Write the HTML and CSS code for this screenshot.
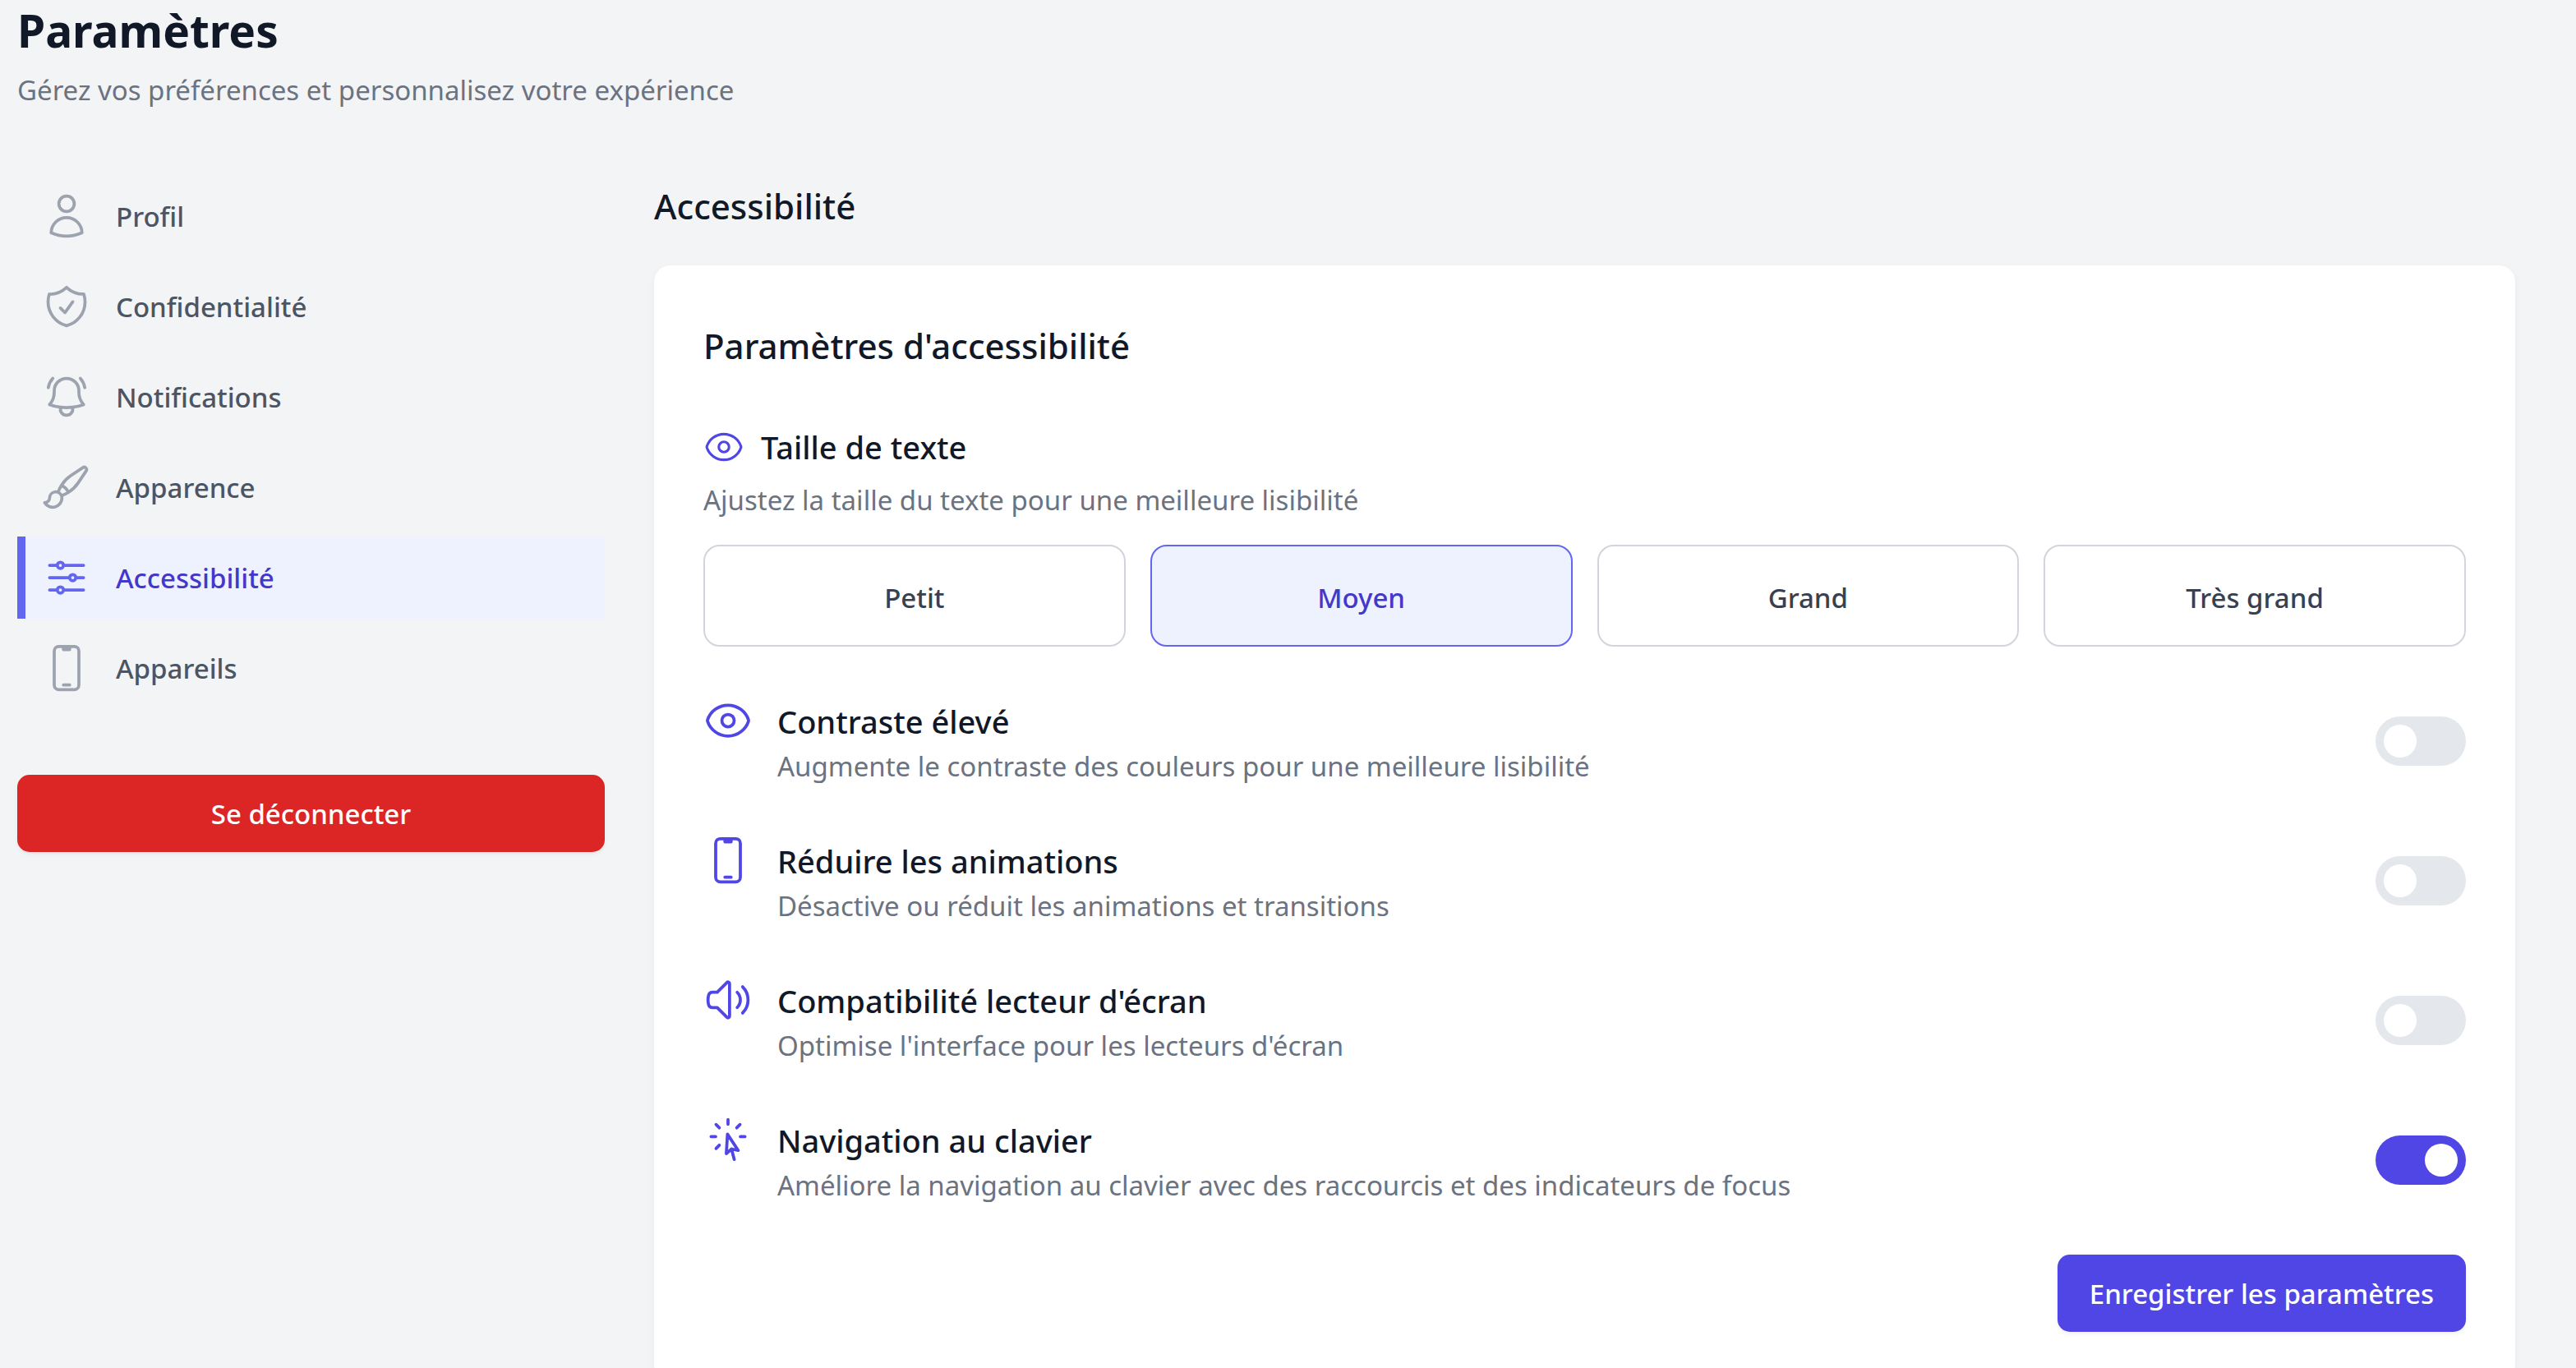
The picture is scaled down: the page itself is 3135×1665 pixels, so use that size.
FILE: index.html
```html
<!DOCTYPE html>
<html lang="fr">
<head>
  <meta charset="utf-8">
  <meta name="viewport" content="width=device-width, initial-scale=1">
  <title>Paramètres</title>
  <link rel="stylesheet" href="styles.css">
</head>
<body>
  <svg class="sprite" aria-hidden="true">
    <symbol id="icon-user" viewBox="0 0 24 24"><path d="M15.75 6a3.75 3.75 0 1 1-7.5 0 3.75 3.75 0 0 1 7.5 0ZM4.501 20.118a7.5 7.5 0 0 1 14.998 0A17.933 17.933 0 0 1 12 21.75c-2.676 0-5.216-.584-7.499-1.632Z"/></symbol>
    <symbol id="icon-shield" viewBox="0 0 24 24"><path d="M9 12.75 11.25 15 15 9.75m-3-7.036A11.959 11.959 0 0 1 3.598 6 11.99 11.99 0 0 0 3 9.749c0 5.592 3.824 10.29 9 11.623 5.176-1.332 9-6.03 9-11.622 0-1.31-.21-2.571-.598-3.751h-.152c-3.196 0-6.1-1.248-8.25-3.285Z"/></symbol>
    <symbol id="icon-bell" viewBox="0 0 24 24"><path d="M14.857 17.082a23.848 23.848 0 0 0 5.454-1.31A8.967 8.967 0 0 1 18 9.75V9A6 6 0 0 0 6 9v.75a8.967 8.967 0 0 1-2.312 6.022c1.733.64 3.56 1.085 5.455 1.31m5.714 0a24.255 24.255 0 0 1-5.714 0m5.714 0a3 3 0 1 1-5.714 0M3.124 7.5A8.969 8.969 0 0 1 5.292 3m13.416 0a8.969 8.969 0 0 1 2.168 4.5"/></symbol>
    <symbol id="icon-brush" viewBox="0 0 24 24"><path d="M9.53 16.122a3 3 0 0 0-5.78 1.128 2.25 2.25 0 0 1-2.4 2.245 4.5 4.5 0 0 0 8.4-2.245c0-.399-.078-.78-.22-1.128Zm0 0a15.998 15.998 0 0 0 3.388-1.62m-5.043-.025a15.994 15.994 0 0 1 1.622-3.395m3.42 3.42a15.995 15.995 0 0 0 4.764-4.648l3.876-5.814a1.151 1.151 0 0 0-1.597-1.597L14.146 6.32a15.996 15.996 0 0 0-4.649 4.763m3.42 3.42a6.776 6.776 0 0 0-3.42-3.42"/></symbol>
    <symbol id="icon-sliders" viewBox="0 0 24 24"><path d="M10.5 6h9.75M10.5 6a1.5 1.5 0 1 1-3 0m3 0a1.5 1.5 0 1 0-3 0M3.75 6H7.5m3 12h9.75m-9.75 0a1.5 1.5 0 0 1-3 0m3 0a1.5 1.5 0 0 0-3 0m-3.75 0H7.5m9-6h3.75m-3.75 0a1.5 1.5 0 0 1-3 0m3 0a1.5 1.5 0 0 0-3 0m-9.75 0h9.75"/></symbol>
    <symbol id="icon-phone" viewBox="0 0 24 24"><path d="M10.5 1.5H8.25A2.25 2.25 0 0 0 6 3.75v16.5a2.25 2.25 0 0 0 2.25 2.25h7.5A2.25 2.25 0 0 0 18 20.25V3.75a2.25 2.25 0 0 0-2.25-2.25H13.5m-3 0V3h3V1.5m-3 0h3m-3 18.75h3"/></symbol>
    <symbol id="icon-eye" viewBox="0 0 24 24"><path d="M2.036 12.322a1.012 1.012 0 0 1 0-.639C3.423 7.51 7.36 4.5 12 4.5c4.638 0 8.573 3.007 9.963 7.178.07.207.07.431 0 .639C20.577 16.49 16.64 19.5 12 19.5c-4.638 0-8.573-3.007-9.963-7.178Z"/><path d="M15 12a3 3 0 1 1-6 0 3 3 0 0 1 6 0Z"/></symbol>
    <symbol id="icon-speaker" viewBox="0 0 24 24"><path d="M19.114 5.636a9 9 0 0 1 0 12.728M16.463 8.288a5.25 5.25 0 0 1 0 7.424M6.75 8.25l4.72-4.72a.75.75 0 0 1 1.28.53v15.88a.75.75 0 0 1-1.28.53l-4.72-4.72H4.51c-.88 0-1.704-.507-1.938-1.354A9.009 9.009 0 0 1 2.25 12c0-.83.112-1.633.322-2.396C2.806 8.756 3.63 8.25 4.51 8.25H6.75Z"/></symbol>
    <symbol id="icon-cursor" viewBox="0 0 24 24"><path d="M15.042 21.672 13.684 16.6m0 0-2.51 2.225.569-9.47 5.227 7.917-3.286-.672ZM12 2.25V4.5m5.834.166-1.591 1.591M20.25 10.5H18M7.757 14.743l-1.59 1.59M6 10.5H3.75m4.007-4.243-1.59-1.59"/></symbol>
  </svg>

  <div class="page">
    <header class="page-header">
      <h1 class="page-title">Paramètres</h1>
      <p class="description">Gérez vos préférences et personnalisez votre expérience</p>
    </header>

    <div class="layout">
      <aside class="sidebar">
        <nav class="nav" aria-label="Paramètres">
          <a class="nav-item" href="#profil"><svg class="icon" aria-hidden="true"><use href="#icon-user"/></svg><span class="nav-label">Profil</span></a>
          <a class="nav-item" href="#confidentialite"><svg class="icon" aria-hidden="true"><use href="#icon-shield"/></svg><span class="nav-label">Confidentialité</span></a>
          <a class="nav-item" href="#notifications"><svg class="icon" aria-hidden="true"><use href="#icon-bell"/></svg><span class="nav-label">Notifications</span></a>
          <a class="nav-item" href="#apparence"><svg class="icon" aria-hidden="true"><use href="#icon-brush"/></svg><span class="nav-label">Apparence</span></a>
          <a class="nav-item nav-item-active" href="#accessibilite" aria-current="page"><svg class="icon" aria-hidden="true"><use href="#icon-sliders"/></svg><span class="nav-label">Accessibilité</span></a>
          <a class="nav-item" href="#appareils"><svg class="icon" aria-hidden="true"><use href="#icon-phone"/></svg><span class="nav-label">Appareils</span></a>
        </nav>
        <button class="button button-danger" type="button">Se déconnecter</button>
      </aside>

      <main class="content" id="accessibilite">
        <h2 class="section-title">Accessibilité</h2>
        <form class="card">
          <h3 class="card-title">Paramètres d'accessibilité</h3>

          <section class="text-size">
            <h4 class="label label-with-icon"><svg class="icon icon-small" aria-hidden="true"><use href="#icon-eye"/></svg>Taille de texte</h4>
            <p class="description">Ajustez la taille du texte pour une meilleure lisibilité</p>
            <div class="options">
              <button class="option" type="button" aria-pressed="false">Petit</button>
              <button class="option option-selected" type="button" aria-pressed="true">Moyen</button>
              <button class="option" type="button" aria-pressed="false">Grand</button>
              <button class="option" type="button" aria-pressed="false">Très grand</button>
            </div>
          </section>

          <div class="settings">
            <div class="setting">
              <svg class="icon" aria-hidden="true"><use href="#icon-eye"/></svg>
              <div class="setting-text">
                <label class="label" for="contrast">Contraste élevé</label>
                <p class="description" id="contrast-text">Augmente le contraste des couleurs pour une meilleure lisibilité</p>
              </div>
              <input class="toggle" type="checkbox" role="switch" id="contrast" aria-describedby="contrast-text">
            </div>
            <div class="setting">
              <svg class="icon" aria-hidden="true"><use href="#icon-phone"/></svg>
              <div class="setting-text">
                <label class="label" for="motion">Réduire les animations</label>
                <p class="description" id="motion-text">Désactive ou réduit les animations et transitions</p>
              </div>
              <input class="toggle" type="checkbox" role="switch" id="motion" aria-describedby="motion-text">
            </div>
            <div class="setting">
              <svg class="icon" aria-hidden="true"><use href="#icon-speaker"/></svg>
              <div class="setting-text">
                <label class="label" for="reader">Compatibilité lecteur d'écran</label>
                <p class="description" id="reader-text">Optimise l'interface pour les lecteurs d'écran</p>
              </div>
              <input class="toggle" type="checkbox" role="switch" id="reader" aria-describedby="reader-text">
            </div>
            <div class="setting">
              <svg class="icon" aria-hidden="true"><use href="#icon-cursor"/></svg>
              <div class="setting-text">
                <label class="label" for="keyboard">Navigation au clavier</label>
                <p class="description" id="keyboard-text">Améliore la navigation au clavier avec des raccourcis et des indicateurs de focus</p>
              </div>
              <input class="toggle" type="checkbox" role="switch" id="keyboard" aria-describedby="keyboard-text" checked>
            </div>
          </div>

          <div class="actions">
            <button class="button button-primary" type="submit">Enregistrer les paramètres</button>
          </div>
        </form>
      </main>
    </div>
  </div>
</body>
</html>
```
FILE: styles.css
```css
*,
*::before {
  box-sizing: border-box;
}

body {
  margin: 0;
  background: #f3f4f6;
  color: #111827;
  font-family: "Segoe UI", "Noto Sans", sans-serif;
  font-size: 33px;
  line-height: 48px;
}

h1,
h2,
h3,
h4,
p {
  margin: 0;
}

button {
  font: inherit;
  font-weight: 550;
  cursor: pointer;
}

.sprite {
  display: none;
}

.page {
  padding: 0 74px 60px 21px;
}

.page-header {
  display: flex;
  flex-direction: column;
  gap: 12px;
  margin-bottom: 79px;
}

.page-title {
  font-size: 55px;
  font-weight: 700;
  line-height: 74px;
}

.description {
  color: #6b7280;
}

.layout {
  display: grid;
  grid-template-columns: repeat(12, minmax(0, 1fr));
  column-gap: 60px;
  align-items: start;
}

.sidebar {
  grid-column: span 3;
  display: grid;
  gap: 80px;
}

.content {
  grid-column: span 9;
}

/* Icons */

.icon {
  flex: none;
  width: 60px;
  height: 60px;
  fill: none;
  stroke: currentColor;
  stroke-width: 1.5;
  stroke-linecap: round;
  stroke-linejoin: round;
  color: #4f46e5;
}

.icon-small {
  width: 50px;
  height: 50px;
}

/* Sidebar navigation */

.nav {
  display: grid;
  gap: 10px;
}

.nav-item {
  display: flex;
  align-items: center;
  gap: 30px;
  padding: 20px 30px 20px 20px;
  border-left: 10px solid transparent;
  color: #4b5563;
  font-weight: 550;
  text-decoration: none;
}

.nav-item .icon {
  color: #9ca3af;
}

.nav-label {
  padding-top: 2px;
}

.nav-item-active {
  border-color: #6366f1;
  background: #eef2ff;
  color: #4338ca;
}

.nav-item-active .icon {
  color: #6366f1;
}

/* Buttons */

.button {
  padding: 24px 39px 22px;
  border: 0;
  border-radius: 15px;
  color: #fff;
  box-shadow: 0 3px 5px rgb(0 0 0 / 5%);
}

.button-danger {
  background: #dc2626;
}

.button-primary {
  background: #4f46e5;
}

/* Card */

.section-title,
.card-title {
  font-size: 42px;
  font-weight: 550;
  line-height: 75px;
}

.section-title {
  margin-bottom: 35px;
}

.card {
  padding: 60px;
  border-radius: 20px;
  background: #fff;
  box-shadow: 0 3px 8px rgb(0 0 0 / 5%);
}

.card-title {
  margin-bottom: 55px;
}

.label {
  font-size: 38px;
  font-weight: 550;
  line-height: 62px;
}

.label-with-icon {
  display: flex;
  align-items: center;
  gap: 20px;
  margin-bottom: 10px;
}

.options {
  display: grid;
  grid-template-columns: repeat(4, minmax(0, 1fr));
  gap: 30px;
  margin-top: 30px;
}

.option {
  padding: 39px 30px 33px;
  border: 2px solid #d1d5db;
  border-radius: 20px;
  background: #fff;
  color: #374151;
}

.option-selected {
  border-color: #6366f1;
  background: #eef2ff;
  color: #4338ca;
}

.settings {
  display: grid;
  gap: 60px;
  margin: 60px 0;
}

.setting {
  display: flex;
  align-items: flex-start;
  gap: 30px;
}

.setting-text {
  flex: 1;
  display: grid;
}

.toggle {
  appearance: none;
  flex: none;
  align-self: center;
  display: flex;
  align-items: center;
  width: 110px;
  height: 60px;
  margin: 0;
  padding: 0 10px;
  border-radius: 30px;
  background: #e4e7ec;
  cursor: pointer;
}

.toggle::before {
  content: "";
  width: 40px;
  height: 40px;
  border-radius: 50%;
  background: #fff;
}

.toggle:checked {
  justify-content: flex-end;
  background: #4f46e5;
}

.actions {
  display: flex;
  justify-content: flex-end;
}
```
